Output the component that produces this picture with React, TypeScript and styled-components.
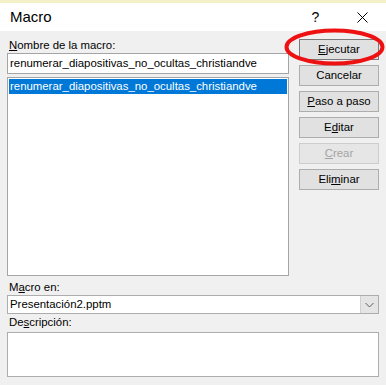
import React from "react";
import styled, { createGlobalStyle } from "styled-components";

const Global = createGlobalStyle`
  html, body { margin: 0; padding: 0; background: #f0f0f0; }
  body { font-family: "Liberation Sans", Arial, sans-serif; font-size: 11.4px; color: #000; }
  * { box-sizing: border-box; }
`;

const Frame = styled.div`
  position: relative;
  width: 386px;
  height: 385px;
  overflow: hidden;
  background: #f0f0f0;
  display: flex;
  flex-direction: column;
`;

const Backdrop = styled.div`
  height: 3px;
  background: #f4f0c8;
  flex: none;
`;

const TitleBar = styled.div`
  height: 28px;
  background: #fff;
  display: flex;
  align-items: center;
  padding-left: 10px;
  flex: none;
`;

const Title = styled.div`
  font-size: 15px;
  flex: 1;
  padding-bottom: 1px;
`;

const TitleButton = styled.div<{ $w: number }>`
  width: ${(p) => p.$w}px;
  height: 28px;
  display: flex;
  align-items: center;
  justify-content: center;
  font-size: 14px;
`;

const Body = styled.div`
  flex: 1;
  display: flex;
  flex-direction: column;
  padding: 6px 7px 0 7px;
`;

const Main = styled.div`
  display: grid;
  grid-template-columns: 282px 80px;
  column-gap: 10px;
`;

const LeftCol = styled.div`
  display: flex;
  flex-direction: column;
`;

const Label = styled.div`
  height: 16px;
  line-height: 16px;
  padding-left: 2px;
`;

const U = styled.span`
  text-decoration: underline;
  text-underline-offset: 1px;
`;

const TextBox = styled.div`
  height: 21px;
  border: 1px solid #a5a5a5;
  background: #fff;
  padding: 0 2px;
  line-height: 19px;
  white-space: nowrap;
`;

const List = styled.div`
  margin-top: 3px;
  height: 199px;
  border: 1px solid #a5a5a5;
  background: #fff;
  padding: 1px;
`;

const ListItem = styled.div<{ $selected?: boolean }>`
  height: 15px;
  line-height: 14px;
  padding-left: 1px;
  white-space: nowrap;
  background: ${(p) => (p.$selected ? "#0078d7" : "transparent")};
  color: ${(p) => (p.$selected ? "#fff" : "#000")};
`;

const RightCol = styled.div`
  display: flex;
  flex-direction: column;
  gap: 5px;
  padding-top: 2px;
`;

const Button = styled.div<{ $disabled?: boolean; $default?: boolean }>`
  height: 21px;
  border: 1px solid ${(p) => (p.$disabled ? "#cdcdcd" : p.$default ? "#7a7a7a" : "#adadad")};
  background: ${(p) => (p.$disabled ? "#e6e6e6" : "#e1e1e1")};
  color: ${(p) => (p.$disabled ? "#a3a3a3" : "#000")};
  display: flex;
  align-items: center;
  justify-content: center;
  line-height: 19px;
`;

const Bottom = styled.div`
  display: flex;
  flex-direction: column;
  margin-top: 3px;
`;

const Combo = styled.div`
  height: 19px;
  border: 1px solid #adadad;
  background: #fff;
  display: flex;
`;

const ComboText = styled.div`
  flex: 1;
  padding-left: 2px;
  line-height: 17px;
`;

const ComboArrow = styled.div`
  width: 18px;
  background: #e5e5e5;
  border-left: 1px solid #d0d0d0;
  display: flex;
  align-items: center;
  justify-content: center;
`;

const Description = styled.div`
  margin-top: 2px;
  height: 45px;
  width: 372px;
  border: 1px solid #adadad;
  background: #fff;
`;

const Annotation = styled.svg`
  position: absolute;
  left: 284px;
  top: 28px;
  width: 101px;
  height: 38px;
  pointer-events: none;
`;

export default function App() {
  const name = "renumerar_diapositivas_no_ocultas_christiandve";
  return (
    <>
      <Global />
      <Frame>
        <Backdrop />
        <TitleBar>
          <Title>Macro</Title>
          <TitleButton $w={45}>?</TitleButton>
          <TitleButton $w={48}>
            <svg width="11" height="11" viewBox="0 0 11 11">
              <path d="M0.5 0.5 L10.5 10.5 M10.5 0.5 L0.5 10.5" stroke="#000" strokeWidth="1" />
            </svg>
          </TitleButton>
        </TitleBar>
        <Body>
          <Main>
            <LeftCol>
              <Label>
                <U>N</U>ombre de la macro:
              </Label>
              <TextBox>{name}</TextBox>
              <List>
                <ListItem $selected>{name}</ListItem>
              </List>
            </LeftCol>
            <RightCol>
              <Button $default>
                <span>
                  <U>E</U>jecutar
                </span>
              </Button>
              <Button>Cancelar</Button>
              <Button>
                <span>
                  <U>P</U>aso a paso
                </span>
              </Button>
              <Button>
                <span>
                  E<U>d</U>itar
                </span>
              </Button>
              <Button $disabled>
                <span>
                  <U>C</U>rear
                </span>
              </Button>
              <Button>
                <span>
                  Eli<U>m</U>inar
                </span>
              </Button>
            </RightCol>
          </Main>
          <Bottom>
            <Label>
              M<U>a</U>cro en:
            </Label>
            <Combo>
              <ComboText>Presentación2.pptm</ComboText>
              <ComboArrow>
                <svg width="9" height="6" viewBox="0 0 9 6">
                  <path d="M0.5 1 L4.5 5 L8.5 1" stroke="#606060" strokeWidth="1" fill="none" />
                </svg>
              </ComboArrow>
            </Combo>
            <Label>
              De<U>s</U>cripción:
            </Label>
            <Description />
          </Bottom>
        </Body>
        <Annotation viewBox="0 0 101 38">
          <ellipse cx="50.5" cy="19" rx="48" ry="16.5" fill="none" stroke="#ee1111" strokeWidth="4" />
        </Annotation>
      </Frame>
    </>
  );
}
